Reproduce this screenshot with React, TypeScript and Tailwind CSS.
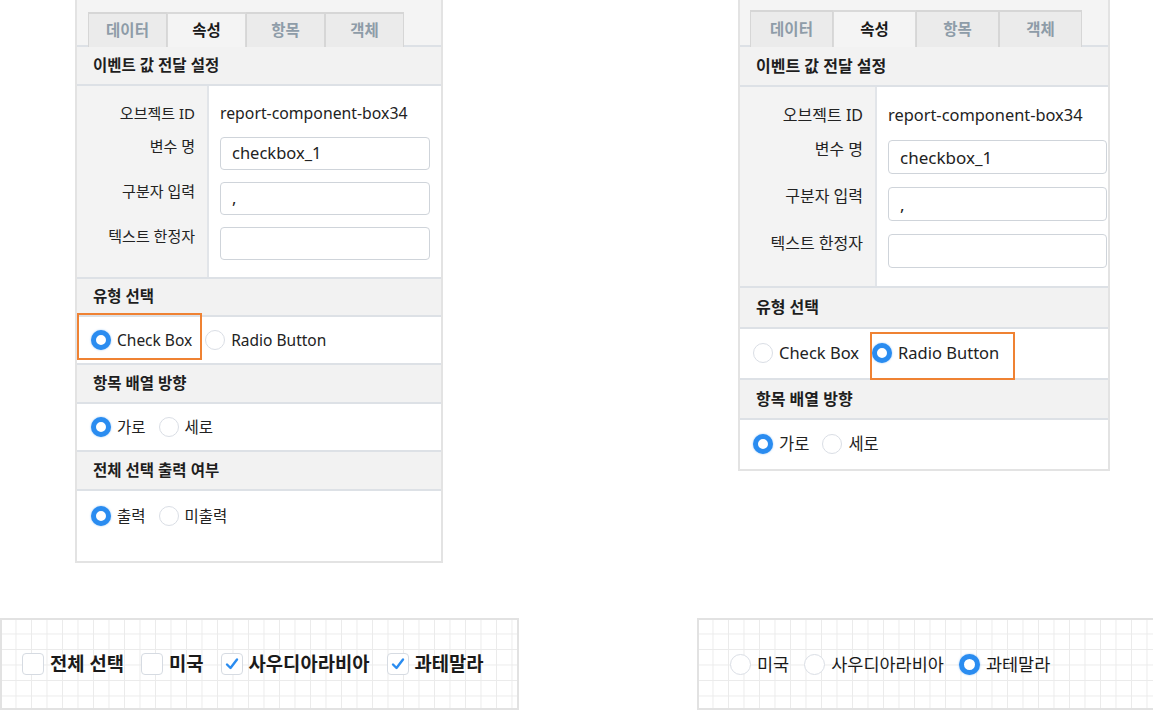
import React from "react";

const FONT = "font-['Noto_Sans','Noto_Sans_CJK_KR',sans-serif]";

type Cfg = {
  panel: string;
  strip: string;
  tab: string;
  tabText: string;
  header: string;
  headerText: string;
  leftCol: string;
  rightCol: string;
  label: string;
  labelRow: string;
  firstLabel: string;
  firstRow: string;
  input: string;
  radioRow: string;
  lastRow: string;
  radioText: string;
  gapItems: string;
};

const LEFT: Cfg = {
  panel: "w-[368px] h-[563px]",
  strip: "h-[47px] pt-[12px] pl-[11px]",
  tab: "w-[79px] h-[35px]",
  tabText: "text-[15.5px]",
  header: "h-[39px] pl-[16px]",
  headerText: "text-[15.5px]",
  leftCol: "w-[132px] pt-[15px] pb-[17px]",
  rightCol: "pl-[11px] pr-[11px] pt-[15px] pb-[17px] gap-[12px]",
  label: "text-[15px] leading-[24px] -mt-[3px]",
  labelRow: "h-[33px] mt-[12px]",
  firstLabel: "h-[24px] text-[15px] leading-[24px]",
  firstRow: "h-[24px] text-[15.8px] leading-[24px]",
  input: "h-[33px] text-[16.5px] pl-[11px]",
  radioRow: "h-[49px] pl-[14px]",
  lastRow: "h-[71px] pl-[14px] pt-[13px]",
  radioText: "text-[15.5px]",
  gapItems: "gap-[13px]",
};

const RIGHT: Cfg = {
  panel: "w-[372px] h-[471px]",
  strip: "h-[47px] pt-[10px] pl-[10px]",
  tab: "w-[83px] h-[37px]",
  tabText: "text-[15.5px]",
  header: "h-[41px] pl-[16px]",
  headerText: "text-[16px]",
  leftCol: "w-[137px] pt-[16px] pb-[18px]",
  rightCol: "pl-[11px] pr-[1px] pt-[16px] pb-[18px] gap-[13px]",
  label: "text-[16px] leading-[24px] -mt-[3px]",
  labelRow: "h-[34px] mt-[13px]",
  firstLabel: "h-[24px] text-[16px] leading-[24px]",
  firstRow: "h-[24px] text-[16.4px] leading-[24px]",
  input: "h-[34px] text-[17px] pl-[11px]",
  radioRow: "h-[52px] pl-[13px]",
  lastRow: "h-[50px] pl-[13px]",
  radioText: "text-[16.5px]",
  gapItems: "gap-[13px]",
};

function Radio({ checked, big }: { checked?: boolean; big?: boolean }) {
  const size = big ? "w-[21px] h-[21px]" : "w-[20px] h-[20px]";
  if (checked) {
    return (
      <span
        className={`${size} shrink-0 rounded-full border-[5px] border-[#2a8cf0] bg-white shadow-[0_0_2px_rgba(42,140,240,0.55)]`}
      />
    );
  }
  return (
    <span
      className={`${size} shrink-0 rounded-full border-[1.5px] border-[#dadee5] bg-white`}
    />
  );
}

function Option({
  checked,
  text,
  cfg,
  box,
}: {
  checked?: boolean;
  text: string;
  cfg: Cfg;
  box?: string;
}) {
  return (
    <span className="relative flex items-center gap-[6px]">
      <Radio checked={checked} />
      <span className={`${cfg.radioText} leading-[24px] text-[#222]`}>{text}</span>
      {box ? <span className={`absolute border-2 border-[#ef8233] ${box}`} /> : null}
    </span>
  );
}

function SectionHeader({ cfg, children }: { cfg: Cfg; children: React.ReactNode }) {
  return (
    <div
      className={`${cfg.header} flex items-center bg-[#f2f2f2] border-b-2 border-[#dde1e6]`}
    >
      <span className={`${cfg.headerText} font-bold text-[#1e1e1e]`}>{children}</span>
    </div>
  );
}

function Panel({
  cfg,
  radioMode,
  showLast,
}: {
  cfg: Cfg;
  radioMode: boolean;
  showLast: boolean;
}) {
  const tabs = ["데이터", "속성", "항목", "객체"];
  return (
    <div
      className={`${cfg.panel} shrink-0 flex flex-col border-x-2 border-b-2 border-[#e3e3e3] bg-white`}
    >
      <div className={`${cfg.strip} flex bg-[#f4f4f4] border-b-2 border-[#dde1e6]`}>
        {tabs.map((t, i) => {
          const active = i === 1;
          return (
            <div
              key={t}
              className={`${cfg.tab} ${cfg.tabText} flex items-center justify-center border-t-2 border-x ${
                active
                  ? "bg-[#f4f4f4] border-[#d9d9d9] text-[#1a1a1a] font-bold -mb-[2px] h-auto"
                  : "bg-[#ebebeb] border-[#d6d6d6] text-[#8e9ca8] font-bold"
              }`}
            >
              {t}
            </div>
          );
        })}
      </div>
      <SectionHeader cfg={cfg}>이벤트 값 전달 설정</SectionHeader>
      <div className="flex border-b-2 border-[#dde1e6]">
        <div
          className={`${cfg.leftCol} shrink-0 flex flex-col items-end pr-[12px] bg-[#f3f3f3] border-r-2 border-[#e2e5e9] text-[#222]`}
        >
          <div className={cfg.firstLabel}>오브젝트 ID</div>
          <div className={cfg.labelRow}>
            <div className={cfg.label}>변수 명</div>
          </div>
          <div className={cfg.labelRow}>
            <div className={cfg.label}>구분자 입력</div>
          </div>
          <div className={cfg.labelRow}>
            <div className={cfg.label}>텍스트 한정자</div>
          </div>
        </div>
        <div className={`${cfg.rightCol} flex-1 flex flex-col text-[#222]`}>
          <div className={cfg.firstRow}>report-component-box34</div>
          <div
            className={`${cfg.input} flex items-center rounded-[4px] border border-[#cfd4da] bg-white`}
          >
            checkbox_1
          </div>
          <div
            className={`${cfg.input} flex items-center rounded-[4px] border border-[#cfd4da] bg-white`}
          >
            ,
          </div>
          <div
            className={`${cfg.input} flex items-center rounded-[4px] border border-[#cfd4da] bg-white`}
          />
        </div>
      </div>
      <SectionHeader cfg={cfg}>유형 선택</SectionHeader>
      <div className={`${cfg.radioRow} flex items-center ${cfg.gapItems} border-b-2 border-[#dde1e6]`}>
        <Option
          cfg={cfg}
          checked={!radioMode}
          text="Check Box"
          box={radioMode ? undefined : "-left-[14px] -right-[10px] -top-[15px] -bottom-[8px]"}
        />
        <Option
          cfg={cfg}
          checked={radioMode}
          text="Radio Button"
          box={radioMode ? "-left-[2px] -right-[16px] -top-[9px] -bottom-[15px]" : undefined}
        />
      </div>
      <SectionHeader cfg={cfg}>항목 배열 방향</SectionHeader>
      <div
        className={`${showLast ? cfg.radioRow + " border-b-2 border-[#dde1e6]" : cfg.lastRow} flex items-center ${cfg.gapItems}`}
      >
        <Option cfg={cfg} checked text="가로" />
        <Option cfg={cfg} text="세로" />
      </div>
      {showLast ? (
        <>
          <SectionHeader cfg={cfg}>전체 선택 출력 여부</SectionHeader>
          <div className={`${cfg.lastRow} flex items-start ${cfg.gapItems}`}>
            <Option cfg={cfg} checked text="출력" />
            <Option cfg={cfg} text="미출력" />
          </div>
        </>
      ) : null}
    </div>
  );
}

function Check({ checked }: { checked?: boolean }) {
  return (
    <span className="w-[22px] h-[22px] shrink-0 rounded-[4px] border-[1.5px] border-[#d6dbe2] bg-white flex items-center justify-center">
      {checked ? (
        <svg width="14" height="14" viewBox="0 0 14 14">
          <path
            d="M2 7.5 L5.5 11 L12 2.5"
            fill="none"
            stroke="#2a8cf0"
            strokeWidth="2.4"
            strokeLinecap="round"
            strokeLinejoin="round"
          />
        </svg>
      ) : null}
    </span>
  );
}

const GRID =
  "bg-[linear-gradient(to_right,#ebebeb_1px,transparent_1px),linear-gradient(to_bottom,#ebebeb_1px,transparent_1px)] bg-[size:15.5px_15.5px] bg-[position:-2px_-2px]";

export default function App() {
  return (
    <div className={`${FONT} w-[1153px] h-[710px] bg-white overflow-hidden flex flex-col`}>
      <div className="flex items-start pl-[75px]">
        <Panel cfg={LEFT} radioMode={false} showLast />
        <div className="ml-[295px]">
          <Panel cfg={RIGHT} radioMode showLast={false} />
        </div>
      </div>
      <div className="flex items-start mt-[55px]">
        <div
          className={`w-[519px] h-[92px] shrink-0 border-2 border-[#e2e2e2] ${GRID} flex items-center pl-[20px] gap-[17px]`}
        >
          {[
            { t: "전체 선택", c: false },
            { t: "미국", c: false },
            { t: "사우디아라비아", c: true },
            { t: "과테말라", c: true },
          ].map((it) => (
            <span key={it.t} className="flex items-center gap-[6px]">
              <Check checked={it.c} />
              <span className="text-[18.8px] font-bold text-[#1a1a1a] leading-[24px]">{it.t}</span>
            </span>
          ))}
        </div>
        <div
          className={`ml-[178px] w-[460px] h-[92px] shrink-0 border-2 border-[#e2e2e2] ${GRID} flex items-center pl-[31px] gap-[15px]`}
        >
          {[
            { t: "미국", c: false },
            { t: "사우디아라비아", c: false },
            { t: "과테말라", c: true },
          ].map((it) => (
            <span key={it.t} className="flex items-center gap-[6px]">
              <Radio checked={it.c} big />
              <span className="text-[17.5px] text-[#1a1a1a] leading-[24px]">{it.t}</span>
            </span>
          ))}
        </div>
      </div>
    </div>
  );
}
